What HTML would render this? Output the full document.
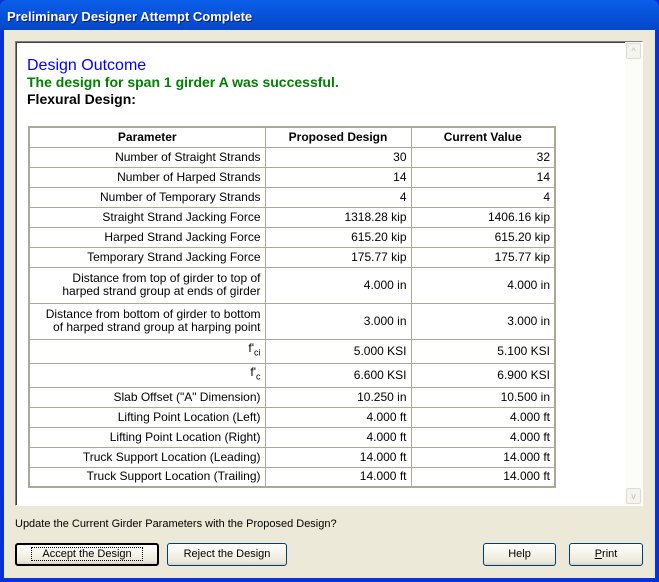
<!DOCTYPE html>
<html><head><style>
*{margin:0;padding:0;box-sizing:border-box}
body{width:659px;height:582px;background:#0831d9;font-family:"Liberation Sans",sans-serif;position:relative;overflow:hidden}
.title{position:absolute;left:0;top:0;width:659px;height:30px;background:linear-gradient(#0a5fe8,#0854dd 40%,#0447c8);border-radius:7px 7px 0 0;color:#fff;font-weight:bold;font-size:13px;padding:9px 0 0 7px;text-shadow:1px 1px #0a1e7a}
.frame{position:absolute;left:4px;top:30px;width:651px;height:548px;background:#ece9d8}
.panel{position:absolute;left:15px;top:41px;width:628px;height:465px;background:#fff;border:1px solid #808080;border-right-color:#fff;border-bottom-color:#fff;box-shadow:inset 1px 1px #404040}
.sb{position:absolute;left:625px;top:42px;width:17px;height:463px;background:#fcfcf9}
.sbb{position:absolute;left:626px;width:15px;height:16px;border:1px solid #dcdcd4;border-radius:2px;background:#f4f3ee;color:#c0c0b8;font-size:9px;text-align:center;line-height:14px}
.h1{position:absolute;left:27px;top:57px;font-size:16px;color:#0000ff}
.h2{position:absolute;left:27px;top:74px;font-size:14px;color:#008000;font-weight:bold}
.h3{position:absolute;left:27px;top:91px;font-size:14px;color:#000;font-weight:bold}
table{position:absolute;left:28px;top:126px;border-collapse:collapse;border:2px solid #aca899;font-size:12px}
td{border:1px solid #aca899;height:20px;padding:0 4px;text-align:right;line-height:13px}
td.c1{width:236px}td.c2{width:146px}td.c3{width:144px}
tr.h td{text-align:center;font-weight:bold}
tr.t td{height:36px}tr.f td{height:24px}
sub{font-size:9px}
.q{position:absolute;left:15px;top:518px;font-size:11px}
.btn{position:absolute;top:543px;height:23px;border:1px solid #003c74;border-radius:3px;background:linear-gradient(#fff,#ece9d8 85%,#d6d0c5);font-size:11px;text-align:center;line-height:21px}
</style></head><body>
<div class="title">Preliminary Designer Attempt Complete</div>
<div class="frame"></div>
<div class="panel"></div>
<div class="sb"></div>
<div class="sbb" style="top:43px">&#94;</div>
<div class="sbb" style="top:488px">v</div>
<div class="h1">Design Outcome</div>
<div class="h2">The design for span 1 girder A was successful.</div>
<div class="h3">Flexural Design:</div>
<table>
<tr class="h"><td class="c1">Parameter</td><td class="c2">Proposed Design</td><td class="c3">Current Value</td></tr>
<tr><td>Number of Straight Strands</td><td>30</td><td>32</td></tr>
<tr><td>Number of Harped Strands</td><td>14</td><td>14</td></tr>
<tr><td>Number of Temporary Strands</td><td>4</td><td>4</td></tr>
<tr><td>Straight Strand Jacking Force</td><td>1318.28 kip</td><td>1406.16 kip</td></tr>
<tr><td>Harped Strand Jacking Force</td><td>615.20 kip</td><td>615.20 kip</td></tr>
<tr><td>Temporary Strand Jacking Force</td><td>175.77 kip</td><td>175.77 kip</td></tr>
<tr class="t"><td>Distance from top of girder to top of<br>harped strand group at ends of girder</td><td>4.000 in</td><td>4.000 in</td></tr>
<tr class="t"><td>Distance from bottom of girder to bottom<br>of harped strand group at harping point</td><td>3.000 in</td><td>3.000 in</td></tr>
<tr class="f"><td>f'<sub>ci</sub></td><td>5.000 KSI</td><td>5.100 KSI</td></tr>
<tr class="f"><td>f'<sub>c</sub></td><td>6.600 KSI</td><td>6.900 KSI</td></tr>
<tr><td>Slab Offset ("A" Dimension)</td><td>10.250 in</td><td>10.500 in</td></tr>
<tr><td>Lifting Point Location (Left)</td><td>4.000 ft</td><td>4.000 ft</td></tr>
<tr><td>Lifting Point Location (Right)</td><td>4.000 ft</td><td>4.000 ft</td></tr>
<tr><td>Truck Support Location (Leading)</td><td>14.000 ft</td><td>14.000 ft</td></tr>
<tr><td>Truck Support Location (Trailing)</td><td>14.000 ft</td><td>14.000 ft</td></tr>
</table>
<div class="q">Update the Current Girder Parameters with the Proposed Design?</div>
<div class="btn" style="left:15px;width:144px;border:2px solid #000;line-height:19px"><span style="outline:1px dotted #000;padding:0 10px">Accept the Design</span></div>
<div class="btn" style="left:167px;width:120px">Reject the Design</div>
<div class="btn" style="left:483px;width:73px">Help</div>
<div class="btn" style="left:569px;width:74px"><u>P</u>rint</div>
</body></html>
